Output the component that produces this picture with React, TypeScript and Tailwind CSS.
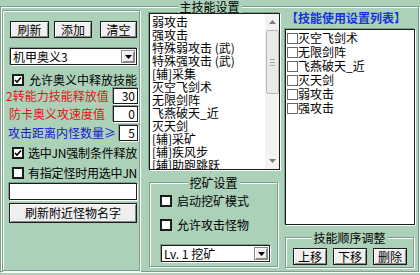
import type { ReactNode } from 'react';

const etched = 'border border-[#7d9f89] shadow-[inset_1px_1px_0_#fff,1px_1px_0_#fff]';
const sunken = 'border border-[#1c1c1c] shadow-[-1px_-1px_0_#7d9f89,1px_1px_0_#fff] bg-white';
const raised =
  'border border-[#1c1c1c] bg-[#efefef] shadow-[inset_1px_1px_0_#fff,inset_-1px_-1px_0_#8a8a8a]';

function Btn({ children, className = '' }: { children: ReactNode; className?: string }) {
  return (
    <div
      className={`flex shrink-0 items-center justify-center whitespace-nowrap text-[12px] leading-none ${raised} ${className}`}
    >
      {children}
    </div>
  );
}

function Check({ checked = false }: { checked?: boolean }) {
  return (
    <div className="flex h-[12px] w-[12px] shrink-0 items-center justify-center border-2 border-[#1c1c1c] bg-white">
      {checked ? (
        <svg viewBox="0 0 8 8" className="h-[8px] w-[8px]">
          <path d="M1 4 L3 6 L7 1.5" fill="none" stroke="#000" strokeWidth="1.6" />
        </svg>
      ) : null}
    </div>
  );
}

function Combo({ label, className = '' }: { label: string; className?: string }) {
  return (
    <div className={`flex items-center ${sunken} ${className}`}>
      <span className="flex-1 whitespace-nowrap pl-[2px] text-[12px] leading-none">{label}</span>
      <div className={`mr-[1px] flex h-[13px] w-[14px] items-center justify-center ${raised} border-[#888]`}>
        <svg viewBox="0 0 7 4" className="h-[4px] w-[7px]">
          <path d="M0 0 H7 L3.5 4 Z" fill="#000" />
        </svg>
      </div>
    </div>
  );
}

function Field({ value, className = '' }: { value: string; className?: string }) {
  return (
    <div
      className={`flex shrink-0 items-center justify-end pr-[2px] text-[12px] leading-none ${sunken} ${className}`}
    >
      {value}
    </div>
  );
}

function Title({ children, top = '-top-[7px]' }: { children: ReactNode; top?: string }) {
  return (
    <span
      className={`absolute ${top} left-1/2 -translate-x-1/2 whitespace-nowrap bg-[#abd1b8] px-[2px] text-[12px] leading-[13px]`}
    >
      {children}
    </span>
  );
}

const mainSkills = [
  '弱攻击',
  '强攻击',
  '特殊弱攻击 (武)',
  '特殊强攻击 (武)',
  '[辅]采集',
  '灭空飞剑术',
  '无限剑阵',
  '飞燕破天_近',
  '灭天剑',
  '[辅]采矿',
  '[辅]疾风步',
  '[辅]助跑跳跃',
];

const useList = ['灭空飞剑术', '无限剑阵', '飞燕破天_近', '灭天剑', '弱攻击', '强攻击'];

export default function App() {
  return (
    <div
      className="h-[275px] w-[420px] overflow-hidden bg-[#abd1b8] text-black"
      style={{ fontFamily: '"Noto Sans CJK SC", "Noto Sans", sans-serif' }}
    >
      <div className={`relative mt-[6px] h-[266px] w-[419px] ${etched}`}>
        <Title>主技能设置</Title>
        <div className="flex pl-[1px] pt-[3px]">
          {/* left panel */}
          <div className={`flex h-[261px] w-[138px] flex-col pl-[7px] ${etched}`}>
            <div className="mt-[10px] flex h-[17px]">
              <Btn className="w-[39px]">刷新</Btn>
              <Btn className="ml-[5px] w-[38px]">添加</Btn>
              <Btn className="ml-[8px] w-[37px]">清空</Btn>
            </div>
            <Combo label="机甲奥义3" className="mt-[10px] h-[17px] w-[127px]" />
            <div className="mt-[9px] flex h-[12px] items-center gap-[5px] whitespace-nowrap pl-[2px]">
              <Check checked />
              <span className="text-[12px] leading-none">允许奥义中释放技能</span>
            </div>
            <div className="-ml-[4px] mt-[2px] flex h-[16px] items-center whitespace-nowrap">
              <span className="flex-1 text-[12px] leading-none text-[#e01414]">2转能力技能释放值</span>
              <Field value="30" className="mr-[1px] h-[16px] w-[25px]" />
            </div>
            <div className="-ml-[1px] mt-[2px] flex h-[16px] items-center whitespace-nowrap">
              <span className="flex-1 text-[12px] leading-none text-[#e01414]">防卡奥义攻速度值</span>
              <Field value="0" className="mr-[1px] h-[16px] w-[25px]" />
            </div>
            <div className="-ml-[2px] mt-[3px] flex h-[16px] items-center whitespace-nowrap">
              <span className="flex-1 text-[12px] leading-none text-[#1818c8]">攻击距离内怪数量≥</span>
              <Field value="5" className="mr-[1px] h-[16px] w-[19px]" />
            </div>
            <div className="mt-[6px] flex h-[12px] items-center gap-[4px] whitespace-nowrap pl-[2px]">
              <Check checked />
              <span className="text-[12px] leading-none tracking-[-0.2px]">选中JN强制条件释放</span>
            </div>
            <div className="mt-[8px] flex h-[12px] items-center gap-[4px] whitespace-nowrap pl-[2px]">
              <Check />
              <span className="text-[12px] leading-none tracking-[-0.2px]">有指定怪时用选中JN</span>
            </div>
            <div className={`-ml-[1px] mt-[4px] h-[17px] w-[128px] ${sunken}`} />
            <Btn className="-ml-[1px] mt-[3px] h-[20px] w-[128px]">刷新附近怪物名字</Btn>
          </div>

          {/* middle column */}
          <div className="ml-[9px] flex w-[131px] flex-col">
            <div className={`mt-[3px] flex h-[157px] w-[131px] ${sunken}`}>
              <div className="flex-1 overflow-hidden pl-[2px] pt-[1px]">
                {mainSkills.map((s) => (
                  <div key={s} className="h-[13px] whitespace-nowrap text-[12px] leading-[13px]">
                    {s}
                  </div>
                ))}
              </div>
              <div className="flex w-[14px] flex-col items-center bg-[#f3f3f1]">
                <div className="flex h-[16px] items-center justify-center">
                  <svg viewBox="0 0 7 4" className="h-[4px] w-[7px]">
                    <path d="M0 4 H7 L3.5 0 Z" fill="#7a7a7a" />
                  </svg>
                </div>
                <div className="flex h-[64px] w-[13px] flex-col items-center justify-center gap-[2px] rounded-[2px] border border-[#b9b9b9] bg-[#e9e9e7]">
                  <div className="h-px w-[5px] bg-[#a8a8a8]" />
                  <div className="h-px w-[5px] bg-[#a8a8a8]" />
                  <div className="h-px w-[5px] bg-[#a8a8a8]" />
                </div>
                <div className="flex-1" />
                <div className="flex h-[16px] items-center justify-center">
                  <svg viewBox="0 0 7 4" className="h-[4px] w-[7px]">
                    <path d="M0 0 H7 L3.5 4 Z" fill="#7a7a7a" />
                  </svg>
                </div>
              </div>
            </div>
            <div className={`relative mt-[12px] flex h-[85px] w-[129px] flex-col pl-[10px] ${etched}`}>
              <Title>挖矿设置</Title>
              <div className="mt-[12px] flex h-[12px] items-center gap-[5px] whitespace-nowrap">
                <Check />
                <span className="text-[12px] leading-none">启动挖矿模式</span>
              </div>
              <div className="mt-[12px] flex h-[12px] items-center gap-[5px] whitespace-nowrap">
                <Check />
                <span className="text-[12px] leading-none">允许攻击怪物</span>
              </div>
              <Combo label="Lv. 1 挖矿" className="ml-[1px] mt-[14px] h-[17px] w-[109px]" />
            </div>
          </div>

          {/* right column */}
          <div className="ml-[5px] flex w-[131px] flex-col">
            <div className="flex h-[16px] items-center whitespace-nowrap pl-[1px] text-[12px] font-bold leading-none text-[#1535d8]">
              【技能使用设置列表】
            </div>
            <div className={`mt-[3px] h-[196px] w-[130px] pl-[1px] pt-[1px] ${sunken}`}>
              {useList.map((s) => (
                <div key={s} className="flex h-[14px] items-center whitespace-nowrap">
                  <div className="h-[11px] w-[11px] shrink-0 border border-[#6a6a6a] bg-white" />
                  <span className="text-[12px] leading-none">{s}</span>
                </div>
              ))}
            </div>
            <div className={`relative mt-[12px] flex h-[31px] w-[129px] items-center pl-[7px] ${etched}`}>
              <Title>技能顺序调整</Title>
              <Btn className="mt-[8px] h-[17px] w-[34px]">上移</Btn>
              <Btn className="ml-[6px] mt-[8px] h-[17px] w-[34px]">下移</Btn>
              <Btn className="ml-[6px] mt-[8px] h-[17px] w-[34px]">删除</Btn>
            </div>
          </div>
        </div>
      </div>
    </div>
  );
}
